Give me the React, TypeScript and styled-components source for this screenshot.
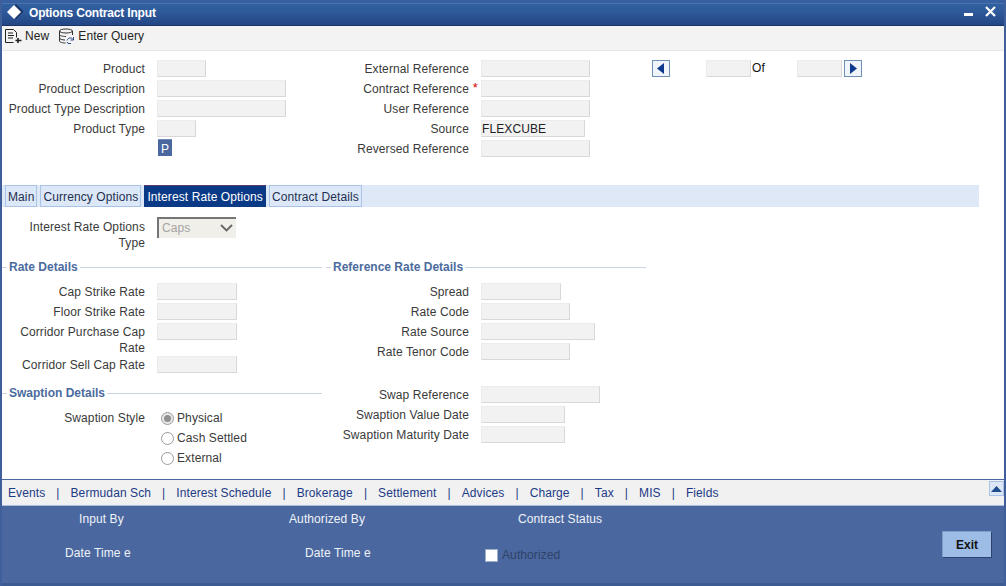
import React from "react";
import styled, { createGlobalStyle } from "styled-components";

const Global = createGlobalStyle`
  html, body { margin: 0; padding: 0; background: #fff; }
  body { font-family: "Liberation Sans", Arial, sans-serif; font-size: 12px; color: #333; letter-spacing: 0.1px; }
`;

const Frame = styled.div`
  width: 1006px; height: 586px; box-sizing: border-box;
  display: flex; flex-direction: column;
  border-left: 2px solid #3f5f9b; border-right: 2px solid #3f5f9b;
  overflow: hidden; background: #fff;
`;
const TitleBar = styled.div`
  height: 26px; flex: none; box-sizing: border-box; margin: 0 -2px;
  display: flex; align-items: center; padding: 3px 10px 0 7px;
  border-bottom: 1px solid #1a3468;
  background: linear-gradient(#36609f 0, #36609f 3px, #4d72ab 3px, #4d72ab 4px, #30609f 4px, #2f5a9c 45%, #234684 100%);
  color: #fff; font-weight: bold; font-size: 12px; letter-spacing: -0.18px;
`;
const TitleText = styled.span`margin-left: 5px; flex: 1; margin-top: -2px;`;
const WinIcon = styled.svg`display: block; flex: none; margin-top: -6px;`;
const Toolbar = styled.div`
  height: 25px; flex: none; box-sizing: border-box; background: #f3f3f3;
  border-bottom: 1px solid #e8e8e8;
  display: flex; align-items: center; padding-left: 2px; color: #222;
`;
const ToolButton = styled.span`
  display: flex; align-items: center; gap: 3px; margin-right: 9px; margin-top: -4px;
`;
const HeaderForm = styled.div`
  height: 134px; flex: none; box-sizing: border-box; padding-top: 9px; display: flex;
`;
const Column = styled.div<{ $pad?: number; $top?: number }>`
  width: 322px; flex: none; box-sizing: border-box;
  padding-left: ${(p) => p.$pad ?? 0}px;
  margin-top: ${(p) => p.$top ?? 0}px;
  display: flex; flex-direction: column; gap: 3px;
`;
const Row = styled.div<{ $h?: number }>`
  display: flex; align-items: flex-start;
  height: ${(p) => p.$h ?? 17}px;
`;
const Label = styled.label<{ $top?: number }>`
  width: 143px; flex: none; margin-right: 12px; text-align: right; box-sizing: border-box;
  padding-top: ${(p) => p.$top ?? 1}px;
  line-height: 16px; color: #3a3a3a; position: relative;
`;
const Star = styled.span`
  position: absolute; right: -9px; top: 0; color: #d00; font-size: 13px;
`;
const Field = styled.div<{ $w: number; $ml?: number }>`
  width: ${(p) => p.$w}px; height: 17px; flex: none; box-sizing: border-box;
  margin-left: ${(p) => p.$ml ?? 0}px;
  background: #f2f2f2;
  border-right: 1px solid #d8d8d8; border-bottom: 1px solid #d8d8d8;
  border-top: 1px solid #ececec; border-left: 1px solid #ececec;
  color: #222; line-height: 16px; padding-left: 0;
`;
const PButton = styled.div`
  width: 14px; height: 17px; margin-left: 156px; margin-top: -1px;
  background: #4a689f; color: #fff; font-size: 12px;
  text-align: center; line-height: 19px; border-top: 1px solid #6f8ab8;
  box-sizing: border-box;
`;
const Pager = styled.div`
  display: flex; align-items: flex-start; margin-left: 6px; height: 17px;
`;
const ArrowButton = styled.div<{ $ml?: number }>`
  width: 18px; height: 17px; box-sizing: border-box; margin-left: ${(p) => p.$ml ?? 0}px;
  background: #f0f5fb; border: 1px solid #6f8eb4;
  display: flex; align-items: center; justify-content: center;
`;
const OfText = styled.span`
  width: 46px; box-sizing: border-box; padding-left: 1px; color: #111; line-height: 17px;
`;
const TabBar = styled.div`
  width: 977px; height: 22px; flex: none; background: #dfe8f6;
  display: flex; gap: 3px; padding-left: 3px; box-sizing: border-box;
`;
const Tab = styled.div<{ $active?: boolean }>`
  height: 22px; box-sizing: border-box; padding: 0 2px; line-height: 22px;
  border: 1px solid ${(p) => (p.$active ? "#0a3a86" : "#a9c3e6")};
  border-top-color: ${(p) => (p.$active ? "#5a3a6a" : "#a9c3e6")};
  background: ${(p) => (p.$active ? "#0a3a86" : "#dce8f8")};
  color: ${(p) => (p.$active ? "#fff" : "#1f2f4f")};
`;
const Main = styled.div`flex: 1; padding-top: 10px; min-height: 0;`;
const SelectBox = styled.div`
  width: 79px; height: 21px; box-sizing: border-box;
  background: #f0efe9; color: #a5a5a5;
  border-top: 2px solid #757575; border-left: 2px solid #757575;
  display: flex; align-items: center; justify-content: space-between;
  padding: 0 3px 2px 3px;
`;
const Columns = styled.div`display: flex; margin-top: 10px;`;
const Stack = styled.div`display: flex; flex-direction: column;`;
const Legend = styled.div`
  display: flex; align-items: center; gap: 2px; height: 16px; margin-bottom: 5px;
  font-weight: bold; color: #4b6b9e; width: 320px; letter-spacing: 0;
  &::before { content: ""; width: 5px; height: 1px; background: #c9d3e2; }
  &::after { content: ""; flex: 1; height: 1px; background: #c9d3e2; }
`;
const RadioGroup = styled.div`
  display: flex; flex-direction: column; gap: 6px; padding: 2px 0 0 4px;
`;
const RadioRow = styled.div`
  display: flex; align-items: center; gap: 3px; height: 14px; color: #3a3a3a;
`;
const Radio = styled.span<{ $on?: boolean }>`
  width: 13px; height: 13px; border-radius: 50%; box-sizing: border-box;
  border: 1px solid #9a9a9a; background: ${(p) => (p.$on ? "#e8e8e8" : "#fff")};
  display: flex; align-items: center; justify-content: center;
  &::after {
    content: ""; width: 7px; height: 7px; border-radius: 50%;
    background: ${(p) => (p.$on ? "#8f8f8f" : "transparent")};
  }
`;
const LinkBar = styled.div`
  height: 26px; flex: none; box-sizing: border-box; background: #f1f1f1;
  border-top: 1px solid #4a689f; padding: 1px 0 0 6px;
  display: flex; align-items: center; gap: 11px;
  color: #1c3a86; position: relative;
`;
const ScrollUp = styled.div`
  position: absolute; right: 0; top: 1px; width: 15px; height: 15px; box-sizing: border-box;
  background: #dbe6f6; border: 1px solid #a9c3e6;
  display: flex; align-items: center; justify-content: center;
`;
const Footer = styled.div`
  height: 81px; flex: none; box-sizing: border-box; margin: 0 -2px;
  background: #4a689f; padding: 0 14px 0 2px;
  border-top: 1px solid #a9bfdf; border-bottom: 3px solid #3d5b93;
  display: flex; color: #f0f3fa;
`;
const FooterGrid = styled.div`
  flex: 1; display: grid; grid-template-columns: 229px 229px 1fr; grid-template-rows: 34px 32px;
  padding-left: 2px; padding-top: 4px;
`;
const FootText = styled.div<{ $ml: number }>`
  margin-left: ${(p) => p.$ml}px; line-height: 16px; padding-top: 1px;
`;
const Authorized = styled.div`
  margin-left: 23px; display: flex; align-items: center; gap: 4px; color: #2f4268; height: 14px; margin-top: 4px;
`;
const CheckBox = styled.span`
  width: 13px; height: 13px; background: #fff; border: 1px solid #9fb0cc; box-sizing: border-box;
`;
const ExitButton = styled.div`
  width: 50px; height: 27px; box-sizing: border-box; margin-top: 25px;
  background: #9dbce6; color: #111; font-weight: bold; font-size: 12px; letter-spacing: 0;
  text-align: center; line-height: 26px;
  border: 1px solid #7e9cc8; border-right-color: #2d4270; border-bottom-color: #2d4270;
`;

const LEFT = [
  ["Product", 49],
  ["Product Description", 129],
  ["Product Type Description", 129],
  ["Product Type", 39],
] as const;
const RIGHT = [
  ["External Reference", 109, ""],
  ["Contract Reference", 109, ""],
  ["User Reference", 109, ""],
  ["Source", 104, "FLEXCUBE"],
  ["Reversed Reference", 109, ""],
] as const;
const LINKS = ["Events", "Bermudan Sch", "Interest Schedule", "Brokerage", "Settlement", "Advices", "Charge", "Tax", "MIS", "Fields"];

export default function App() {
  return (
    <Frame>
      <Global />
      <TitleBar>
        <svg width="17" height="17" viewBox="0 0 17 17" style={{ marginTop: -3 }}>
          <path d="M9 0l7.500 7.500L9 15 1.500 7.500z" fill="#1b3567" />
          <path d="M7 1L14 8l-7 7-7-7z" fill="#fff" />
        </svg>
        <TitleText>Options Contract Input</TitleText>
        <WinIcon width="32" height="13" viewBox="0 0 32 13">
          <rect x="0" y="8" width="9" height="3" fill="#fff" />
          <path d="M22 2l9 9M31 2l-9 9" stroke="#fff" strokeWidth="2.200" />
        </WinIcon>
      </TitleBar>
      <Toolbar>
        <ToolButton>
          <svg width="18" height="16" viewBox="0 0 18 16" fill="none" stroke="#222" strokeWidth="1">
            <path d="M1.500 14.500V1.500h8l3 3v5M1.500 14.500h8" />
            <path d="M4 5h5M4 7.500h6M4 10h5" />
            <path d="M14 10v5M11.500 12.500h6" strokeWidth="1.600" />
          </svg>
          New
        </ToolButton>
        <ToolButton>
          <svg width="17" height="16" viewBox="0 0 17 16" fill="none" stroke="#333" strokeWidth="1">
            <ellipse cx="8" cy="3" rx="6.500" ry="2" />
            <path d="M1.500 3v10c0 1.200 3 2 6 2M14.500 3v4M1.500 6.500c0 1.200 3 2 6.500 2M1.500 10c0 1.200 3 2 5.500 2" />
            <path d="M9 12.500c1-3 4.500-3.500 6-1M15.500 9v3h-3M9 14l1 1.500h3" stroke="#2a4a88" />
          </svg>
          Enter Query
        </ToolButton>
      </Toolbar>
      <HeaderForm>
        <Column>
          {LEFT.map(([t, w]) => (
            <Row key={t}>
              <Label>{t}</Label>
              <Field $w={w} />
            </Row>
          ))}
          <PButton>P</PButton>
        </Column>
        <Column $pad={2}>
          {RIGHT.map(([t, w, v]) => (
            <Row key={t}>
              <Label>
                {t}
                {t === "Contract Reference" && <Star>*</Star>}
              </Label>
              <Field $w={w}>{v}</Field>
            </Row>
          ))}
        </Column>
        <Pager>
          <ArrowButton>
            <svg width="8" height="11" viewBox="0 0 8 11"><path d="M7 0v11L0 5.500z" fill="#0d3a8c" /></svg>
          </ArrowButton>
          <Field $w={45} $ml={36} />
          <OfText>Of</OfText>
          <Field $w={45} />
          <ArrowButton $ml={2}>
            <svg width="8" height="11" viewBox="0 0 8 11"><path d="M1 0v11l7-5.500z" fill="#0d3a8c" /></svg>
          </ArrowButton>
        </Pager>
      </HeaderForm>
      <TabBar>
        <Tab>Main</Tab>
        <Tab>Currency Options</Tab>
        <Tab $active>Interest Rate Options</Tab>
        <Tab>Contract Details</Tab>
      </TabBar>
      <Main>
        <Row $h={32}>
          <Label $top={2}>Interest Rate Options Type</Label>
          <SelectBox>
            Caps
            <svg width="13" height="8" viewBox="0 0 13 8" fill="none" stroke="#666" strokeWidth="1.800">
              <path d="M1 1l5.500 5.500L12 1" />
            </svg>
          </SelectBox>
        </Row>
        <Columns>
          <Stack>
            <Column>
              <Legend>Rate Details</Legend>
              <Row><Label>Cap Strike Rate</Label><Field $w={80} /></Row>
              <Row><Label>Floor Strike Rate</Label><Field $w={80} /></Row>
              <Row $h={30}><Label>Corridor Purchase Cap Rate</Label><Field $w={80} /></Row>
              <Row><Label>Corridor Sell Cap Rate</Label><Field $w={80} /></Row>
            </Column>
            <Column $top={12}>
              <Legend>Swaption Details</Legend>
              <Row $h={60}>
                <Label>Swaption Style</Label>
                <RadioGroup>
                  <RadioRow><Radio $on />Physical</RadioRow>
                  <RadioRow><Radio />Cash Settled</RadioRow>
                  <RadioRow><Radio />External</RadioRow>
                </RadioGroup>
              </Row>
            </Column>
          </Stack>
          <Stack>
            <Column $pad={2}>
              <Legend>Reference Rate Details</Legend>
              <Row><Label>Spread</Label><Field $w={80} /></Row>
              <Row><Label>Rate Code</Label><Field $w={89} /></Row>
              <Row><Label>Rate Source</Label><Field $w={114} /></Row>
              <Row><Label>Rate Tenor Code</Label><Field $w={89} /></Row>
            </Column>
            <Column $pad={2} $top={26}>
              <Row><Label>Swap Reference</Label><Field $w={119} /></Row>
              <Row><Label>Swaption Value Date</Label><Field $w={84} /></Row>
              <Row><Label>Swaption Maturity Date</Label><Field $w={84} /></Row>
            </Column>
          </Stack>
        </Columns>
      </Main>
      <LinkBar>
        {LINKS.map((l, i) => (
          <React.Fragment key={l}>
            {i > 0 && <span>|</span>}
            <span>{l}</span>
          </React.Fragment>
        ))}
        <ScrollUp>
          <svg width="11" height="6" viewBox="0 0 11 6"><path d="M5.500 0L11 6H0z" fill="#1f4a8c" /></svg>
        </ScrollUp>
      </LinkBar>
      <Footer>
        <FooterGrid>
          <FootText $ml={75}>Input By</FootText>
          <FootText $ml={56}>Authorized By</FootText>
          <FootText $ml={56}>Contract Status</FootText>
          <FootText $ml={61}>Date Time e</FootText>
          <FootText $ml={72}>Date Time e</FootText>
          <Authorized><CheckBox />Authorized</Authorized>
        </FooterGrid>
        <ExitButton>Exit</ExitButton>
      </Footer>
    </Frame>
  );
}
